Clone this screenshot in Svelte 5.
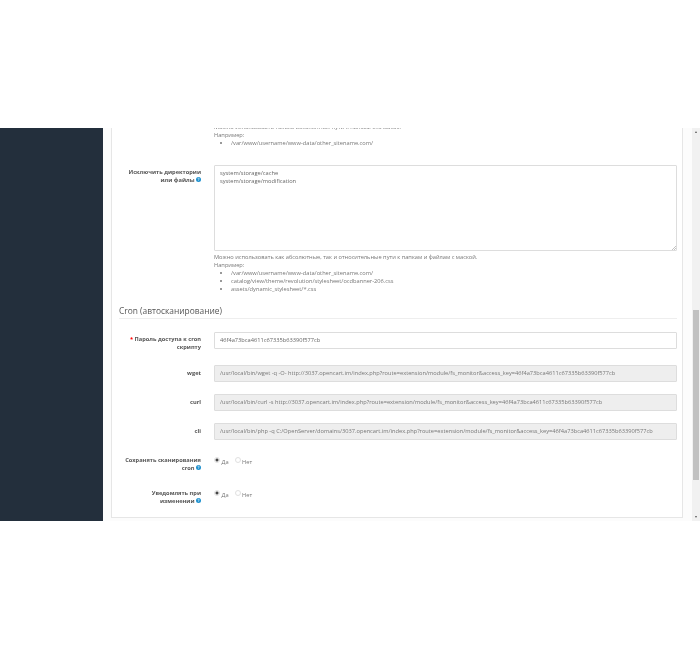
<script>
  const key = '46f4a73bca4611c67335b63390f577cb';
  const url = `3037.opencart.im/index.php?route=extension/module/fs_monitor&access_key=${key}`;

  const commands = [
    { name: 'wget', value: `/usr/local/bin/wget -q -O- http://${url}` },
    { name: 'curl', value: `/usr/local/bin/curl -s http://${url}` },
    { name: 'cli', value: `/usr/local/bin/php -q C:/OpenServer/domains/${url}` },
  ];

  const toggles = [
    ['Сохранять сканирования', 'cron'],
    ['Уведомлять при', 'изменении'],
  ];
</script>

{#snippet hint()}
  <svg class="hint" viewBox="0 0 10 10" aria-hidden="true">
    <circle cx="5" cy="5" r="5" fill="#1e91cf" />
    <path d="M3.6 4c0-2 2.900-2 2.900-.3 0 1.100-1.500 1.100-1.500 2.300" fill="none" stroke="#fff" stroke-width="1.200" />
    <rect x="4.400" y="6.800" width="1.200" height="1.200" fill="#fff" />
  </svg>
{/snippet}

<div class="page">
  <aside class="sidebar"></aside>

  <main class="content">
    <section class="panel">
      <div class="row first">
        <div class="label"></div>
        <div class="field">
          <div class="help">
            Можно использовать только абсолютные пути к папкам без масок.<br />Например:
            <ul><li>/var/www/username/www-data/other_sitename.com/</li></ul>
          </div>
        </div>
      </div>

      <div class="row exclude">
        <div class="label">Исключить директории<br />или файлы {@render hint()}</div>
        <div class="field">
          <div class="area">
            <textarea readonly>system/storage/cache
system/storage/modification</textarea>
            <svg class="grip" viewBox="0 0 4 4" aria-hidden="true">
              <path d="M0 4 4 0M2 4 4 2" stroke="#888" stroke-width=".5" />
            </svg>
          </div>
          <div class="help">
            Можно использовать как абсолютные, так и относительные пути к папкам и файлам с маской.<br />Например:
            <ul>
              <li>/var/www/username/www-data/other_sitename.com/</li>
              <li>catalog/view/theme/revolution/stylesheet/ocdbanner-206.css</li>
              <li>assets/dynamic_stylesheet/*.css</li>
            </ul>
          </div>
        </div>
      </div>

      <h3>Cron (автосканирование)</h3>

      <div class="row password">
        <div class="label"><span class="req">*</span> Пароль доступа к cron<br />скрипту</div>
        <div class="field"><input readonly value={key} /></div>
      </div>

      {#each commands as cmd (cmd.name)}
        <div class="row command">
          <div class="label">{cmd.name}</div>
          <div class="field"><input class="locked" readonly value={cmd.value} /></div>
        </div>
      {/each}

      {#each toggles as lines (lines[0])}
        <div class="row toggle">
          <div class="label">{lines[0]}<br />{lines[1]} {@render hint()}</div>
          <div class="field radios">
            <span class="radio on"></span><span class="opt">Да</span>
            <span class="radio"></span><span class="opt">Нет</span>
          </div>
        </div>
      {/each}
    </section>
  </main>

  <div class="scrollbar">
    <span class="arrow up"></span>
    <div class="track"><div class="thumb"></div></div>
    <span class="arrow down"></span>
  </div>
</div>

<style>
  :global(body) {
    margin: 0;
    background: #fff;
  }

  .page {
    display: flex;
    height: 393px;
    margin-top: 128px;
    overflow: hidden;
    background: #fcfcfc;
    font-family: 'Open Sans', sans-serif;
    font-size: 5.700px;
    line-height: 8px;
    color: #666;
    filter: blur(0.3px);
  }

  .sidebar {
    flex: 0 0 103px;
    background: #232f3c;
  }

  .content {
    flex: 1;
    min-width: 0;
    padding: 0 9px 0 8px;
  }

  .panel {
    height: 390px;
    box-sizing: border-box;
    background: #fff;
    border: 1px solid #e6e6e6;
    border-top: 0;
    padding: 0 5px 0 7px;
    overflow: hidden;
  }

  .row {
    display: flex;
    gap: 13px;
  }

  .label {
    flex: 0 0 82px;
    text-align: right;
    white-space: nowrap;
    font-weight: 700;
    color: #555;
    line-height: 7.500px;
  }

  .field {
    flex: 1;
    min-width: 0;
  }

  .first {
    margin-top: -5px;
    height: 42px;
  }

  .help {
    color: #777;
  }

  ul {
    margin: 0;
    padding-left: 17px;
  }

  li {
    line-height: 8px;
  }

  .exclude .label {
    padding-top: 4px;
  }

  .area {
    position: relative;
    margin-bottom: 2px;
  }

  .grip {
    position: absolute;
    right: 1px;
    bottom: 1px;
    width: 4px;
    height: 4px;
  }

  textarea,
  input {
    display: block;
    box-sizing: border-box;
    width: 100%;
    border: 1px solid #ddd;
    border-radius: 1px;
    background: #fff;
    color: #666;
    font-family: inherit;
    font-size: 5.700px;
    line-height: 8px;
    outline: none;
  }

  textarea {
    height: 86px;
    padding: 3px 5px;
    resize: none;
  }

  input {
    height: 16.500px;
    padding: 0 5px;
  }

  input.locked {
    background: #eee;
    color: #777;
  }

  h3 {
    margin: 11px 0 13px;
    padding-bottom: 1px;
    border-bottom: 1px solid #eee;
    font-size: 8.400px;
    line-height: 13px;
    font-weight: 400;
    color: #555;
  }

  .password {
    height: 33px;
  }

  .password .label {
    padding-top: 4px;
  }

  .req {
    color: #f00;
  }

  .command {
    height: 29px;
    align-items: flex-start;
  }

  .command .label {
    padding-top: 5px;
  }

  .toggle {
    height: 33px;
  }

  .command + .toggle {
    margin-top: 5px;
  }

  .radios {
    display: flex;
    align-items: flex-start;
    padding-top: 0;
  }

  .radio {
    box-sizing: border-box;
    width: 6px;
    height: 6px;
    margin-right: 1.500px;
    border-radius: 50%;
    border: 1px solid #e0e0e0;
    background: #fff;
  }

  .radio.on {
    background: radial-gradient(circle, #444 0 1.300px, #fff 1.800px);
  }

  .opt {
    margin-right: 6px;
    margin-top: 0.500px;
    color: #777;
  }

  .hint {
    display: inline-block;
    width: 5px;
    height: 5px;
    vertical-align: -0.500px;
  }

  .scrollbar {
    flex: 0 0 8px;
    display: flex;
    flex-direction: column;
    align-items: center;
    background: #f1f1f1;
  }

  .track {
    flex: 1;
    width: 100%;
    padding-top: 174px;
    box-sizing: border-box;
  }

  .thumb {
    width: 6px;
    margin: 0 auto;
    height: 170px;
    background: #c1c1c1;
  }

  .arrow {
    width: 0;
    height: 0;
    margin: 3px 0;
    border-left: 1.500px solid transparent;
    border-right: 1.500px solid transparent;
  }

  .arrow.up {
    border-bottom: 2px solid #555;
  }

  .arrow.down {
    border-top: 2px solid #555;
  }
</style>
